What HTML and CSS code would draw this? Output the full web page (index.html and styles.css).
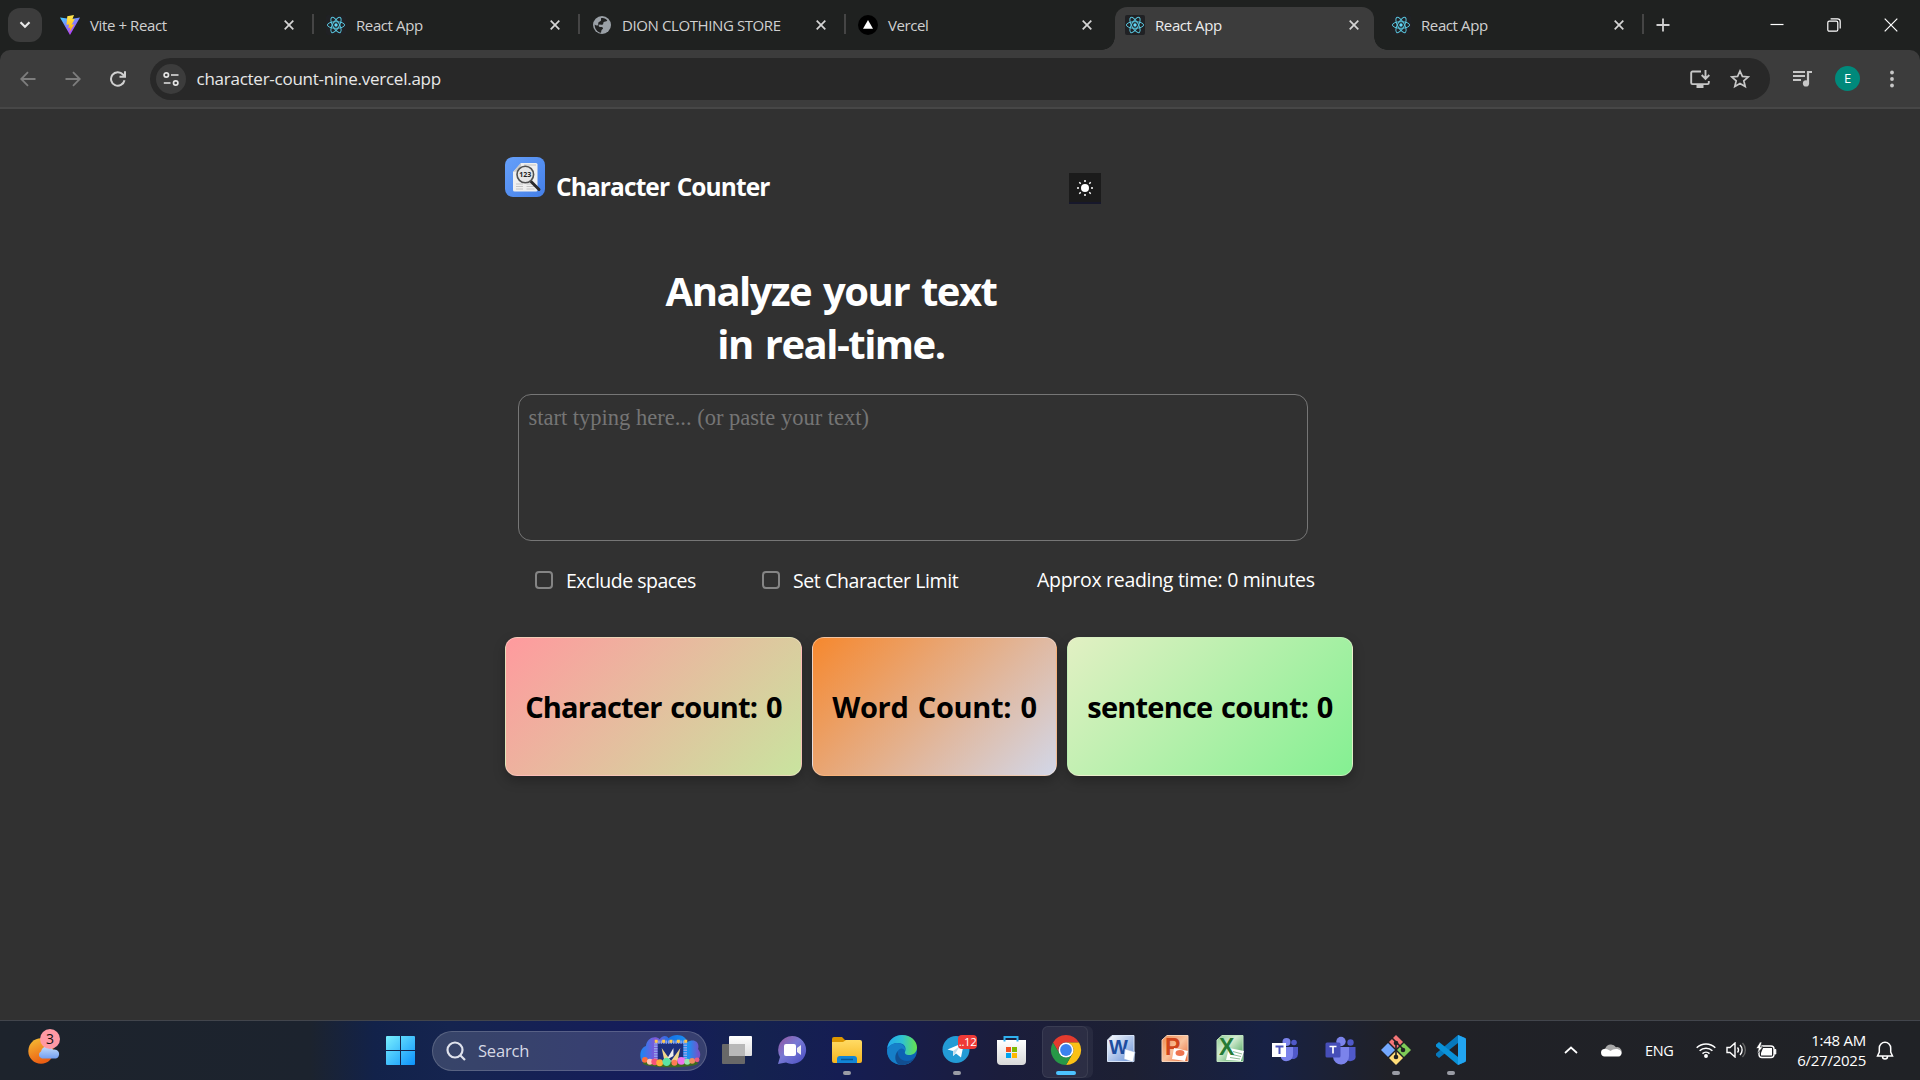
FILE: index.html
```
<!DOCTYPE html>
<html lang="en">
<head>
<meta charset="utf-8">
<title>Character Counter</title>
<link rel="stylesheet" href="styles.css">
</head>
<body>
<svg class="defs" width="0" height="0" aria-hidden="true">
  <symbol id="react" viewBox="0 0 20 20">
    <rect width="20" height="20" rx="2" fill="#202124"/>
    <g fill="none" stroke="#58c4dc" stroke-width="1">
      <ellipse cx="10" cy="10" rx="8.6" ry="3.3"/>
      <ellipse cx="10" cy="10" rx="8.6" ry="3.3" transform="rotate(60 10 10)"/>
      <ellipse cx="10" cy="10" rx="8.6" ry="3.3" transform="rotate(120 10 10)"/>
    </g>
    <circle cx="10" cy="10" r="1.7" fill="#61dafb"/>
  </symbol>
  <symbol id="close" viewBox="0 0 10 10"><path d="M.7.7l8.6 8.6M9.3.7L.7 9.3" stroke="#d5d5d5" stroke-width="1.7" fill="none"/></symbol>
</svg>

<header class="tabstrip">
  <button class="tab-search" aria-label="Search tabs"><svg width="12" height="8" viewBox="0 0 12 8"><path d="M1.5 1.3L6 5.8l4.500-4.500" fill="none" stroke="#e8e8e8" stroke-width="2.200"/></svg></button>
  <div class="tabs">
    <div class="tab">
      <svg class="fav" viewBox="0 0 20 20"><defs><linearGradient id="v1" x1="0" y1="0" x2=".6" y2="1"><stop stop-color="#41d1ff"/><stop offset="1" stop-color="#bd34fe"/></linearGradient><linearGradient id="v2" x1="0" y1="0" x2="0" y2="1"><stop stop-color="#ffea50"/><stop offset="1" stop-color="#ffa800"/></linearGradient></defs><path d="M0 2.500L10 20 20 2.500 11 4z" fill="url(#v1)"/><path d="M14 0L7.300 1.300 6.500 9.800l2.600-.4L8.300 13l2.200-.6-1.200 5 5-8.200-2.700.5L14.800 4l-2.400.3z" fill="url(#v2)"/></svg>
      <span class="tab-title">Vite + React</span><svg class="x"><use href="#close"/></svg><i class="sep"></i>
    </div>
    <div class="tab"><svg class="fav"><use href="#react"/></svg><span class="tab-title">React App</span><svg class="x"><use href="#close"/></svg><i class="sep"></i></div>
    <div class="tab">
      <svg class="fav" viewBox="0 0 20 20"><circle cx="10" cy="10" r="9" fill="#9aa0a6"/><path d="M9 3.200c2.500-.8 5 .4 6.300 2.300-1 1.500-2.700.8-3.700 1.700-.7.800.1 1.700-.9 2.400-1.200.7-2.200-.5-3.500.2-1 .6-.7 2 .6 2.200 1.400.1 2.700-.3 3.200 1 .3 1.300-1.300 1.400-1.600 2.600l-.4 2.200C5 17 2.500 13.500 2.700 9.500c1 .7 2.200 1.300 3.200.7C7 9.500 5.600 8.200 6.600 7.200 7.500 6.400 9.300 6.400 9 5z" fill="#202121"/></svg>
      <span class="tab-title">DION CLOTHING STORE</span><svg class="x"><use href="#close"/></svg><i class="sep"></i>
    </div>
    <div class="tab">
      <svg class="fav" viewBox="0 0 20 20"><circle cx="10" cy="10" r="10" fill="#000"/><path d="M10 5l5 8.700H5z" fill="#fff"/></svg>
      <span class="tab-title">Vercel</span><svg class="x"><use href="#close"/></svg>
    </div>
    <div class="tab active"><svg class="fav"><use href="#react"/></svg><span class="tab-title">React App</span><svg class="x"><use href="#close"/></svg></div>
    <div class="tab last"><svg class="fav"><use href="#react"/></svg><span class="tab-title">React App</span><svg class="x"><use href="#close"/></svg><i class="sep"></i></div>
  </div>
  <button class="new-tab" aria-label="New tab"><svg width="14" height="14"><path d="M7 .5v13M.5 7h13" stroke="#d0d0d0" stroke-width="1.800"/></svg></button>
  <div class="window-controls">
    <svg width="14" height="14"><path d="M.5 6.500h13" stroke="#fff" stroke-width="1.200"/></svg>
    <svg width="14" height="14" fill="none" stroke="#fff" stroke-width="1.200"><rect x=".8" y="3.200" width="10" height="10" rx="1.500"/><path d="M3.600.8h7a2.600 2.600 0 0 1 2.600 2.600v7"/></svg>
    <svg width="14" height="14"><path d="M.7.7l12.600 12.600M13.300.7L.7 13.300" stroke="#fff" stroke-width="1.200"/></svg>
  </div>
</header>

<nav class="toolbar">
  <div class="nav-buttons">
    <svg width="16" height="16" fill="none" stroke="#7d7d7d" stroke-width="1.800"><path d="M15.500 8H1.500M8 1.200L1.200 8 8 14.800"/></svg>
    <svg width="16" height="16" fill="none" stroke="#7d7d7d" stroke-width="1.800"><path d="M.5 8h14M8 1.200L14.800 8 8 14.800"/></svg>
    <svg width="16" height="16" fill="none" stroke="#d0d0d0" stroke-width="2"><path d="M14.500 9.300A6.800 6.800 0 1 1 13 3.500l1.500 1.600M15 .3v5.500H9.500"/></svg>
  </div>
  <div class="omnibox">
    <span class="site-info"><svg width="16" height="16" fill="none" stroke="#e3e3e3" stroke-width="1.700"><circle cx="3.300" cy="4" r="2.200"/><path d="M8 4h7.500M.8 12h6.700"/><circle cx="12.700" cy="12" r="2.200"/></svg></span>
    <span class="url">character-count-nine.vercel.app</span>
    <svg width="20" height="18" fill="none" stroke="#c7c7c7" stroke-width="1.900"><path d="M11 1.500H2.500a1.300 1.300 0 0 0-1.300 1.300v10a1.300 1.300 0 0 0 1.300 1.300h15a1.300 1.300 0 0 0 1.300-1.300V11M15.500 0v8.500M11.700 5l3.800 3.800L19.300 5"/><path d="M6.500 16.500h7" stroke-width="3"/></svg>
    <svg class="star" width="20" height="20" viewBox="0 0 20 20" fill="none" stroke="#c7c7c7" stroke-width="1.700"><path d="M10 2l2.400 5.400 5.900.5-4.500 3.900 1.400 5.800L10 14.500l-5.200 3.100 1.400-5.800-4.500-3.900 5.900-.5z"/></svg>
  </div>
  <div class="actions">
    <svg width="20" height="17"><path d="M0 2h12M0 6h12M0 10h8" stroke="#c7c7c7" stroke-width="2"/><path d="M15 13.500V2h4" fill="none" stroke="#c7c7c7" stroke-width="2.200"/><circle cx="13" cy="13.400" r="3.100" fill="#c7c7c7"/></svg>
    <span class="avatar">E</span>
    <svg width="6" height="18" fill="#c7c7c7"><circle cx="3" cy="2.500" r="1.900"/><circle cx="3" cy="9" r="1.900"/><circle cx="3" cy="15.500" r="1.900"/></svg>
  </div>
</nav>

<main class="page">
  <div class="app">
    <div class="brand-row">
      <svg class="logo" viewBox="0 0 40 40"><defs><linearGradient id="lg" x1="0" y1="0" x2="1" y2="1"><stop stop-color="#66a0fa"/><stop offset="1" stop-color="#447fe8"/></linearGradient></defs><rect width="40" height="40" rx="8" fill="url(#lg)"/><path d="M16 6h15a1.500 1.500 0 0 1 1.500 1.500V33a1.500 1.500 0 0 1-1.500 1.500H9.500A1.500 1.500 0 0 1 8 33V15z" fill="#efefef"/><path d="M16 6v7.500L8 15z" fill="#c9c9c9"/><path d="M11 27h7M11 29.500h7M11 32h7M21.500 27h6M21.500 29.500h8M21.500 32h8M19 8h12" stroke="#c4c4c4" stroke-width="1"/><path d="M26 24.500l8 8" stroke="#29292b" stroke-width="3" stroke-linecap="round"/><circle cx="20.300" cy="17.500" r="8.300" fill="#e6e6e6" stroke="#515151" stroke-width="1.600"/><text x="20.300" y="19.700" text-anchor="middle" class="logo-text">123</text></svg>
      <h2 class="brand">Character Counter</h2>
      <button class="theme" aria-label="Toggle theme"><svg width="18" height="18" viewBox="0 0 18 18"><circle cx="9" cy="9" r="4" fill="#fff"/><path d="M9 1v2M9 15v2M1 9h2M15 9h2M3.300 3.300l1.400 1.400M13.300 13.300l1.400 1.400M3.300 14.700l1.400-1.400M13.300 4.700l1.400-1.400" stroke="#fff" stroke-width="1.500"/></svg></button>
    </div>
    <h1 class="headline">Analyze your text<br>in real-time.</h1>
    <textarea class="entry" placeholder="start typing here... (or paste your text)"></textarea>
    <div class="options">
      <label class="option first"><input type="checkbox" class="check"><span>Exclude spaces</span></label>
      <label class="option second"><input type="checkbox" class="check"><span>Set Character Limit</span></label>
      <span class="reading">Approx reading time: 0 minutes</span>
    </div>
    <div class="cards">
      <div class="card characters">Character count: 0</div>
      <div class="card words">Word Count: 0</div>
      <div class="card sentences">sentence count: 0</div>
    </div>
  </div>
</main>

<footer class="taskbar">
  <div class="widgets">
    <svg width="34" height="38" viewBox="0 0 34 38"><defs><linearGradient id="sun" x1="0" y1="0" x2=".4" y2="1"><stop stop-color="#f6c136"/><stop offset="1" stop-color="#ec5f13"/></linearGradient><linearGradient id="cl" x1="0" y1="0" x2="0" y2="1"><stop stop-color="#c2dcfb"/><stop offset="1" stop-color="#739ff0"/></linearGradient></defs><circle cx="13" cy="22" r="12.700" fill="url(#sun)"/><path d="M14 29.500a3.700 3.700 0 0 1-1-7 6.500 6.500 0 0 1 12-1.800 4.400 4.400 0 0 1 3 8.800z" fill="url(#cl)"/><circle cx="22" cy="10" r="10" fill="#ff99a4"/><text class="widget-count" x="22" y="15" text-anchor="middle">3</text></svg>
  </div>
  <svg class="start" viewBox="0 0 29 29"><defs><linearGradient id="win" gradientUnits="userSpaceOnUse" x1="0" y1="0" x2="29" y2="29"><stop stop-color="#79effe"/><stop offset="1" stop-color="#0c92fb"/></linearGradient></defs><path d="M1 0h13v14H0V1a1 1 0 0 1 1-1zM15 0h13a1 1 0 0 1 1 1v13H15zM0 15h14v14H1a1 1 0 0 1-1-1zM15 15h14v13a1 1 0 0 1-1 1H15z" fill="url(#win)"/></svg>
  <div class="search">
    <svg width="20" height="20" fill="none" stroke="#dfe2ec" stroke-width="2.200"><circle cx="9" cy="9" r="7.500"/><path d="M14 14l5 5"/></svg>
    <span class="search-label">Search</span>
    <svg class="art" width="61" height="34" viewBox="0 0 62 34"><defs><linearGradient id="ar" x1="0" y1="0" x2="1" y2="0"><stop stop-color="#1787f5"/><stop offset=".25" stop-color="#8057d8"/><stop offset=".5" stop-color="#1674e8"/><stop offset=".8" stop-color="#1b91f2"/><stop offset="1" stop-color="#7f4bc5"/></linearGradient></defs><path d="M2 28C-2 20 2 13 6 12 7 3 16 1 20 5c3-4 7-4 9-1 7-6 18-3 19 4 7-4 13 0 11 7 4 5 2 9-1 12z" fill="url(#ar)"/><ellipse cx="31" cy="29.500" rx="28" ry="4" fill="#3d6b1f"/><path d="M18 9h26v19H18z" fill="#1c2f7c"/><path d="M16 28V8h30v20" fill="none" stroke="#91a4eb" stroke-width="3.500" stroke-dasharray="1.500 1"/><path d="M22 14l10 14h-7zM41 14L31 28h7z" fill="#efd68b"/><path d="M34 14l-7 12 7-4z" fill="#eee"/><path d="M15 7h33" stroke="#ffc84a" stroke-width="3" stroke-dasharray="3 4.500"/><circle cx="5" cy="26" r="3" fill="#ff6d3b"/><circle cx="10" cy="28" r="3" fill="#ffc5b5"/><circle cx="15" cy="28" r="3.500" fill="#f55279"/><circle cx="20" cy="29" r="3.500" fill="#ffae38"/><circle cx="27" cy="28" r="4.200" fill="#5be3a3"/><circle cx="35" cy="29" r="3" fill="#ff7b54"/><circle cx="42" cy="27" r="4" fill="#ef70ed"/><circle cx="48" cy="28" r="3" fill="#95e6ae"/><circle cx="53" cy="27" r="3" fill="#f18f60"/><circle cx="58" cy="26" r="2.500" fill="#ea5c83"/></svg>
  </div>
  <div class="apps">
    <div class="cell"><svg viewBox="0 0 32 32"><defs><linearGradient id="tv" x1="0" y1="0" x2="0" y2="1"><stop stop-color="#fff"/><stop offset="1" stop-color="#dedede"/></linearGradient></defs><rect x="1" y="10" width="23" height="20" rx="1" fill="#686868"/><rect x="8" y="2" width="23" height="20" rx="1" fill="url(#tv)"/><path d="M8 10h16v12H8z" fill="#b8b8b8"/></svg></div>
    <div class="cell"><svg viewBox="0 0 32 32"><defs><linearGradient id="ch" x1="0" y1="0" x2="1" y2="1"><stop stop-color="#97559d"/><stop offset=".45" stop-color="#7779d4"/><stop offset="1" stop-color="#484cc2"/></linearGradient></defs><path d="M16 2a14 14 0 1 1-6 26.600L2 30l2-7A14 14 0 0 1 16 2z" fill="url(#ch)"/><rect x="8" y="10" width="12" height="12" rx="2" fill="#fff"/><path d="M21 14l4-3v10l-4-3z" fill="#eee"/></svg></div>
    <div class="cell open"><svg viewBox="0 0 32 32"><defs><linearGradient id="fo" x1="0" y1="0" x2="0" y2="1"><stop stop-color="#ffdb65"/><stop offset="1" stop-color="#f6b51e"/></linearGradient></defs><path d="M1 5a2 2 0 0 1 2-2h8l3 3h15v10H1z" fill="#dc9600"/><path d="M1 8h11l3-2h14a2 2 0 0 1 2 2v19a2 2 0 0 1-2 2H3a2 2 0 0 1-2-2z" fill="url(#fo)"/><path d="M6 29v-4a3 3 0 0 1 3-3h14a3 3 0 0 1 3 3v4z" fill="#1285d6"/><path d="M10 25.500h12" stroke="#075796" stroke-width="1.500"/></svg></div>
    <div class="cell"><svg viewBox="0 0 32 32"><defs><linearGradient id="e1" x1="0" y1="0" x2="1" y2="0"><stop stop-color="#22a7ed"/><stop offset=".5" stop-color="#2ec2d2"/><stop offset="1" stop-color="#66e34c"/></linearGradient></defs><circle cx="16" cy="16" r="15" fill="#0d62b4"/><path d="M1.200 14C2.500 6 8.500 1 16 1c9 0 15 6 15 12.500 0 5-4 7.500-7.500 7.500-4 0-5-1.500-4.500-3 2-5-1-9-7-9-4.500 0-8 2-10.800 5z" fill="url(#e1)"/><path d="M1.200 15C3.500 11 7 9 11 9c5.500 0 9 4 8 8-.5-1.500-2-2.500-3.500-2.500C11 15 10 20 14 25c3 4 7 4 11.500 2.500C18 34-.5 31 1.200 15z" fill="#167fc9"/><path d="M12 17c-1 4 2 10 9 10 4 0 6-2 8-4-3 6-9 8-13 8-8 0-8-11-4-14z" fill="#124e91"/></svg></div>
    <div class="cell open"><svg viewBox="0 0 32 32"><circle cx="15" cy="15.500" r="13.500" fill="#239bd5"/><path d="M6.500 15.500L23 8.500l-3 15-5-4-3 2.500v-5l-5.500-1.500z" fill="#fff"/><path d="M12 17l7-5-4.500 7-2 3z" fill="#c1dceb"/></svg><b class="badge">..12</b></div>
    <div class="cell"><svg viewBox="0 0 32 32"><defs><linearGradient id="st" x1="0" y1="0" x2="0" y2="1"><stop stop-color="#fff"/><stop offset="1" stop-color="#d9d9d9"/></linearGradient></defs><path d="M2 6h29v21a4 4 0 0 1-4 4H6a4 4 0 0 1-4-4z" fill="url(#st)"/><path d="M9.500 7.500V3h13v4.500" fill="none" stroke="#30b1ef" stroke-width="2"/><path d="M11 13h5v5h-5z" fill="#f25022"/><path d="M17 13h5v5h-5z" fill="#7fba00"/><path d="M11 19h5v5h-5z" fill="#00a4ef"/><path d="M17 19h5v5h-5z" fill="#ffb900"/></svg></div>
    <div class="cell current"><svg viewBox="0 0 32 32"><path d="M16 1a15 15 0 0 1 13 7.500H16A7.500 7.500 0 0 0 9.500 20L3 8.500A15 15 0 0 1 16 1z" fill="#e33b2e"/><path d="M29 8.500A15 15 0 0 1 16 31l6.500-11.300A7.500 7.500 0 0 0 16 8.500z" fill="#fbc116"/><path d="M3 8.500l6.500 11.200A7.500 7.500 0 0 0 22.500 19.700L16 31A15 15 0 0 1 3 8.500z" fill="#279847"/><circle cx="16" cy="16" r="7.500" fill="#fff"/><circle cx="16" cy="16" r="5.900" fill="#3b82ef"/></svg></div>
    <div class="cell"><svg viewBox="0 0 32 32"><defs><linearGradient id="wd" x1="0" y1="0" x2="1" y2="1"><stop stop-color="#fff"/><stop offset="1" stop-color="#6690d6"/></linearGradient></defs><path d="M7 1.500h22v26H2.500V6z" fill="url(#wd)" stroke="#d8e4f7"/><text x="4" y="20" class="office word-letter">W</text><path d="M20 15l10 3-2 10-9-3z" fill="#fff" stroke="#9bb3dc" stroke-width=".6"/></svg></div>
    <div class="cell"><svg viewBox="0 0 32 32"><defs><linearGradient id="pp" x1="0" y1="0" x2="1" y2="1"><stop stop-color="#f08b50"/><stop offset=".5" stop-color="#fac39e"/><stop offset="1" stop-color="#e96733"/></linearGradient></defs><path d="M7 1.500h21v26H2V6z" fill="url(#pp)" stroke="#f6d3ba"/><text x="5" y="21" class="office ppt-letter">P</text><path d="M14 14l14 3-3 10-13-2z" fill="#fff"/><ellipse cx="20" cy="19" rx="4.500" ry="3" fill="#ee7550"/></svg></div>
    <div class="cell"><svg viewBox="0 0 32 32"><defs><linearGradient id="xl" x1="0" y1="0" x2="1" y2="1"><stop stop-color="#8fcd94"/><stop offset=".4" stop-color="#d4ecd1"/><stop offset="1" stop-color="#349a49"/></linearGradient></defs><path d="M7 1.500h21v26H2V6z" fill="url(#xl)" stroke="#bfe3c0"/><path d="M14 14l15 3-3 10-15-1z" fill="#fff"/><path d="M18 17.500l9 2.500M17 20.500l9 2M15 23.500l10 1.500" stroke="#90bd98" stroke-width="1"/><text x="4" y="21" class="office xls-letter">X</text></svg></div>
    <div class="cell"><svg viewBox="0 0 32 32"><circle cx="16.500" cy="8" r="4" fill="#7b83eb"/><circle cx="24" cy="8.500" r="2.800" fill="#5059c9"/><path d="M20 13h8v7a5 5 0 0 1-8 4z" fill="#5059c9"/><path d="M11 13h12v7a6.500 6.500 0 0 1-12 4z" fill="#7b83eb"/><path d="M2 9h14v14H2z" fill="#fff"/><path d="M5.500 12.500h8M9.500 12v8" stroke="#4b53bc" stroke-width="2"/></svg></div>
    <div class="cell"><svg viewBox="0 0 32 32"><circle cx="16" cy="7.500" r="4.700" fill="#7b83eb"/><circle cx="25.500" cy="8.500" r="3.200" fill="#5059c9"/><path d="M21 13h9.500v8a5 5 0 0 1-9.500 3z" fill="#5059c9"/><path d="M8 13h16v9a8 8 0 0 1-16 1z" fill="#7b83eb"/><rect x=".5" y="8.500" width="15" height="15" rx="1.500" fill="#464eb8"/><path d="M4.500 12.500h7M8 12.500v7" stroke="#fff" stroke-width="1.700"/></svg></div>
    <div class="cell open"><svg viewBox="0 0 32 32"><path d="M16 1l7 7-7 7-7-7z" fill="#f57678"/><path d="M24 9l7 7-7 7-7-7z" fill="#7fcb57"/><path d="M16 17l7 7-7 7-7-7z" fill="#ffdd78"/><path d="M8 9l7 7-7 7-7-7z" fill="#74a9ff"/><path d="M11 3l5 5v16M17 9l7 7" fill="none" stroke="#202124" stroke-width="1.600"/><circle cx="16" cy="9" r="2.300" fill="#202124"/><circle cx="16" cy="23" r="2.300" fill="#202124"/><circle cx="23" cy="16" r="2.300" fill="#202124"/></svg></div>
    <div class="cell open"><svg viewBox="0 0 32 32"><path d="M23 1l8 3.500v23L23 31V9L4 24l-3-2.500v-2z" fill="#0779bd"/><path d="M4 8l19 15v8L1 12.500v-2z" fill="#0a92d8"/><path d="M23 1l6.500 2.800A2.500 2.500 0 0 1 31 6v20a2.500 2.500 0 0 1-1.500 2.200L23 31z" fill="#22a5f1"/></svg></div>
  </div>
  <div class="tray">
    <svg class="t-chev" width="14" height="8"><path d="M1 7l6-5.500L13 7" fill="none" stroke="#fff" stroke-width="1.700"/></svg>
    <svg class="t-cloud" width="21" height="14"><path d="M4 12a4 4 0 0 1 .5-7A6 6 0 0 1 15 4.200 4.500 4.500 0 0 1 19 12z" fill="#a8a8a8"/><path d="M4 13.500a3.700 3.700 0 0 1-.5-7.400c3-.6 4 .8 6 1.900 2-1.500 5-2.500 8-1.500 4 1 4.200 6.300 0 7z" fill="#fff"/></svg>
    <span class="lang">ENG</span>
    <svg class="t-wifi" width="20" height="16" fill="none" stroke="#fff" stroke-width="1.500"><path d="M.7 5.800a13 13 0 0 1 18.600 0M3.600 8.800a9 9 0 0 1 12.800 0M6.500 11.600a5 5 0 0 1 7 0"/><circle cx="10" cy="14" r="1.200" fill="#fff"/></svg>
    <svg class="t-vol" width="21" height="16" fill="none" stroke="#fff" stroke-width="1.400"><path d="M1 5.500h3L9 1v14l-5-4.500H1zM11.500 5.500a4 4 0 0 1 0 5M14 3a7 7 0 0 1 0 10"/><path d="M16.500 1a10 10 0 0 1 0 14" stroke="#666"/></svg>
    <svg class="t-bat" width="21" height="17"><rect x="3" y="4" width="15" height="11.500" rx="3" fill="none" stroke="#fff" stroke-width="1.400"/><path d="M7 6h9v7.500H5V11z" fill="#fff"/><path d="M18.500 7.500h1.300v4.500h-1.300z" fill="#fff" stroke="#fff"/><path d="M4 0L0 6.500h2.500L1 12l6-7H4.500L6 0z" fill="#fff" stroke="#202226" stroke-width=".7"/></svg>
    <div class="clock"><span>1:48 AM</span><span>6/27/2025</span></div>
    <svg class="t-bell" width="18" height="19" fill="none" stroke="#fff" stroke-width="1.500"><path d="M9 1.200A5.700 5.700 0 0 1 14.700 7v4l1.800 4h-15l1.800-4V7A5.700 5.700 0 0 1 9 1.200zM6.500 15.500a2.500 2.500 0 0 0 5 0"/></svg>
  </div>
</footer>
</body>
</html>
```
FILE: styles.css
```
* { box-sizing: border-box; }
body {
  margin: 0;
  width: 1920px;
  height: 1080px;
  overflow: hidden;
  display: flex;
  flex-direction: column;
  background: #313131;
  color: #fff;
  font-family: "Open Sans", "Noto Sans", sans-serif;
}
svg { display: block; flex: none; }
button { border: 0; padding: 0; background: none; }
.defs { position: absolute; }

/* Tab strip */
.tabstrip { position: relative; z-index: 1; height: 50px; flex: none; display: flex; align-items: center; background: #1f2120; }
.tab-search {
  width: 34px; height: 34px; margin: 0 8px; border-radius: 12px; background: #3c3c3c;
  display: flex; align-items: center; justify-content: center;
}
.tabs { display: flex; height: 50px; align-items: flex-end; gap: 7px; }
.tab { position: relative; width: 259px; height: 43px; padding: 0 15px 7px 10px; display: flex; align-items: center; }
.tab.active { background: #3c3c3c; border-radius: 12px 12px 0 0; margin-left: 1px; }
.tab.active::before, .tab.active::after {
  content: ""; position: absolute; bottom: 0; width: 13px; height: 13px;
}
.tab.active::before { left: -13px; background: radial-gradient(circle at 0 0, transparent 12.5px, #3c3c3c 13px); }
.tab.active::after { right: -13px; background: radial-gradient(circle at 100% 0, transparent 12.5px, #3c3c3c 13px); }
.tab.last { width: 258px; }
.fav { width: 20px; height: 20px; }
.tab-title { margin-left: 10px; flex: 1; font-size: 15px; line-height: 20px; letter-spacing: -0.4px; color: #d0d0d0; white-space: nowrap; padding-bottom: 1px; }
.tab.active .tab-title { color: #ececec; }
.x { width: 10px; height: 10px; }
.sep { position: absolute; right: -5px; top: 7px; width: 2px; height: 20px; background: #454545; }
.new-tab { margin-left: 17px; }
.window-controls { margin-left: auto; margin-right: 22px; display: flex; gap: 43px; }

/* Toolbar */
.toolbar {
  height: 59px; flex: none; display: flex; align-items: center; background: #3c3c3c;
  border-bottom: 2px solid #474747; border-radius: 10px 10px 0 0; box-shadow: 0 -10px 0 #1f2120; padding: 0 25px 0 20px;
}
.nav-buttons { display: flex; gap: 29px; width: 130px; }
.omnibox { width: 1620px; height: 42px; border-radius: 21px; background: #282828; display: flex; align-items: center; padding: 0 20px 0 6px; }
.site-info { width: 30px; height: 30px; border-radius: 50%; background: #3c3c3c; display: flex; align-items: center; justify-content: center; }
.url { flex: 1; margin-left: 10.5px; font-size: 17px; letter-spacing: -0.25px; line-height: 24px; padding-top: 1px; color: #e8e8e8; }
.star { margin-left: 20px; }
.actions { margin-left: auto; display: flex; align-items: center; }
.avatar { width: 25px; height: 25px; margin: 0 29px 0 22px; border-radius: 50%; background: #00897b; font-size: 13px; text-align: center; line-height: 25px; }

/* Page */
.page { flex: 1; }
.app { margin-left: 505px; width: 848px; padding-top: 48px; }
.brand-row { display: flex; height: 60px; }
.logo { width: 40px; height: 40px; }
.logo-text { font: 700 7px "Open Sans", sans-serif; fill: #222; }
.brand { margin: 12px 0 0 11px; font-size: 24.5px; line-height: 36px; letter-spacing: -0.9px; word-spacing: 2px; width: 513px; }
.theme { width: 32px; height: 31px; margin-top: 16px; background: #1b1b1b; border-bottom: 2px solid #17182b; display: flex; align-items: center; justify-content: center; }
.headline { margin: 47px 0 0 126px; width: 400px; text-align: center; font-size: 40px; line-height: 53px; letter-spacing: -1.5px; word-spacing: 3px; }
.entry {
  display: block; width: 790px; height: 147px; margin: 24px 0 0 13px; padding: 10px 9.500px; resize: none;
  border: 1px solid #767676; border-radius: 13px; background: transparent;
  font: 22.5px/26px "Liberation Serif", serif; color: #fff;
}
.entry::placeholder { color: #757575; opacity: 1; }
.options { display: flex; align-items: center; height: 78px; padding-left: 30px; font-size: 19.5px; letter-spacing: -0.5px; white-space: nowrap; }
.option { display: flex; align-items: center; padding-top: 1px; }
.option.first { width: 227px; }
.option.second { width: 275px; letter-spacing: -0.4px; }
.check { appearance: none; width: 18px; height: 18px; margin: -2px 13px 0 0; border: 2px solid #858585; border-radius: 4px; }
.reading { letter-spacing: -0.3px; margin-top: -1px; }
.cards { display: flex; gap: 10px; margin-top: 18px; }
.card {
  height: 139px; padding-bottom: 1px; border-radius: 12px; display: flex; align-items: center; justify-content: center; white-space: nowrap;
  color: #000; font-size: 29px; font-weight: 700; letter-spacing: -0.8px; word-spacing: 2px;
  border: 1px solid rgba(255, 235, 220, .4); box-shadow: 0 5px 12px rgba(0, 0, 0, .25);
}
.characters { width: 297px; background-image: linear-gradient(135deg, #ff9a9e, #c9e49f); }
.words { width: 245px; letter-spacing: -0.3px; background-image: linear-gradient(135deg, #f6882e, #d2d7e8); }
.sentences { width: 286px; background-image: linear-gradient(135deg, #e2f0c3, #84f092); }

/* Taskbar */
.taskbar {
  height: 60px; flex: none; display: flex; align-items: center; border-top: 1px solid #42454c;
  background: linear-gradient(90deg, #1d232c 0, #1c232e 310px, #12224a 375px, #15244f 450px, #151c5c 660px, #14224f 750px, #151d53 840px, #1b1d3c 1000px, #1d2033 1130px, #172144 1265px, #202127 1390px, #202226 100%);
}
.widgets { width: 386px; padding: 0 0 6px 28px; }
.widget-count { font: 14px "Open Sans", sans-serif; fill: #111; }
.start { width: 29px; height: 29px; }
.search {
  width: 275px; height: 40px; margin-left: 17px; border-radius: 20px; display: flex; align-items: center; padding: 0 5px 0 13px;
  background: rgba(255, 255, 255, .15); border: 1px solid rgba(255, 255, 255, .17);
}
.search-label { margin-left: 12px; flex: 1; font-size: 16.5px; letter-spacing: -0.2px; color: #d6d9e5; padding-bottom: 1px; }
.apps { display: flex; margin-left: 2.5px; }
.cell { position: relative; width: 54.9px; height: 50px; display: flex; align-items: center; justify-content: center; }
.cell > svg { width: 32px; height: 32px; margin-bottom: 1px; }
.cell.open::after, .cell.current::after {
  content: ""; position: absolute; left: 23.500px; bottom: 1px; width: 8px; height: 4px; border-radius: 2px; background: #9a9ca5;
}
.cell.current::after { left: 17.500px; width: 20px; background: #4cc2ff; }
.cell.current::before {
  content: ""; position: absolute; left: 3px; top: 0; width: 44px; height: 50px; border-radius: 6px;
  background: rgba(255, 255, 255, .07); border: 1px solid rgba(255, 255, 255, .07); box-shadow: 5px 0 0 rgba(255, 255, 255, .05);
}
.cell.current > svg { position: relative; }
.badge { position: absolute; left: 29px; top: 9px; width: 19px; height: 14px; border-radius: 4px; background: #ef3a37; font-weight: 400; font-size: 11.500px; line-height: 14px; text-align: center; letter-spacing: -0.4px; }
.office { font: 700 23px "Liberation Sans", sans-serif; }
.word-letter { font-size: 20px; fill: #1d4d9f; }
.ppt-letter { fill: #d0451b; }
.xls-letter { fill: #267a35; }
.tray { margin-left: auto; margin-right: 26px; display: flex; align-items: center; padding-bottom: 1px; }
.t-chev { margin-right: 23px; }
.lang { margin: 0 22px 0 23px; font-size: 14.5px; letter-spacing: -0.3px; width: 29px; }
.t-wifi { margin-right: 10px; }
.t-vol { margin-right: 9px; }
.clock { width: 89px; display: flex; flex-direction: column; align-items: flex-end; font-size: 15px; line-height: 20px; letter-spacing: -0.25px; margin-top: -1px; }
.t-bell { margin-left: 10px; }
```
